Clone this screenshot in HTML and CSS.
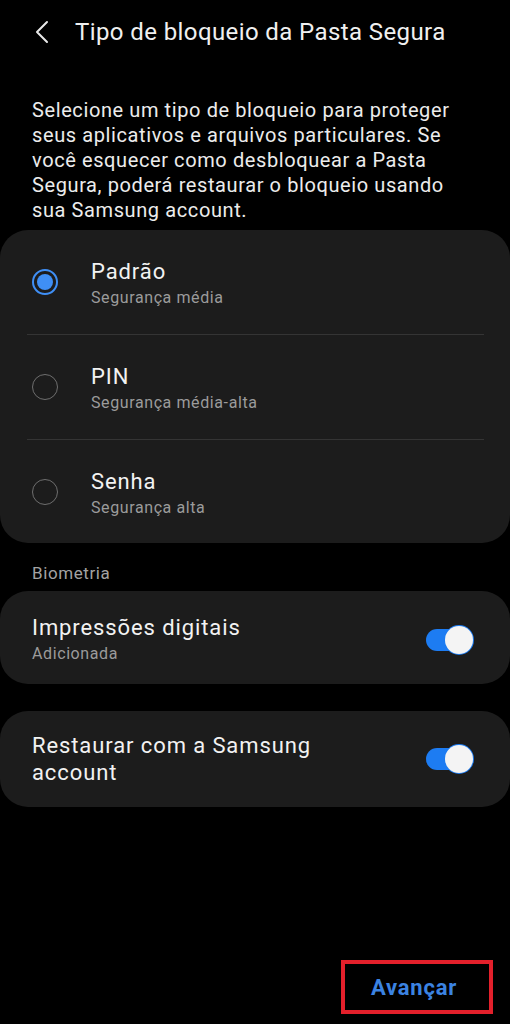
FILE: index.html
```html
<!DOCTYPE html>
<html lang="pt-BR">
<head>
  <meta charset="UTF-8" />
  <meta name="viewport" content="width=device-width, initial-scale=1.0"/>
  <title>Tipo de bloqueio da Pasta Segura</title>
  <link rel="stylesheet" href="styles.css">
</head>
<body>

<div class="screen">
  <header class="topbar">
    <svg class="back" width="14" height="24" viewBox="0 0 14 24">
      <path d="M12 2 L2 12 L12 22" fill="none" stroke="#e8e8e8" stroke-width="2" stroke-linecap="round" stroke-linejoin="round"/>
    </svg>
    <h1>Tipo de bloqueio da Pasta Segura</h1>
  </header>

  <p class="intro">Selecione um tipo de bloqueio para proteger seus aplicativos e arquivos particulares. Se você esquecer como desbloquear a Pasta Segura, poderá restaurar o bloqueio usando sua Samsung account.</p>

  <section class="card lock-list">
    <div class="lock-row">
      <span class="radio checked"></span>
      <div class="row-text">
        <p class="row-title">Padrão</p>
        <p class="row-sub">Segurança média</p>
      </div>
    </div>
    <div class="divider"></div>
    <div class="lock-row">
      <span class="radio"></span>
      <div class="row-text">
        <p class="row-title">PIN</p>
        <p class="row-sub">Segurança média-alta</p>
      </div>
    </div>
    <div class="divider"></div>
    <div class="lock-row">
      <span class="radio"></span>
      <div class="row-text">
        <p class="row-title">Senha</p>
        <p class="row-sub">Segurança alta</p>
      </div>
    </div>
  </section>

  <p class="section-label">Biometria</p>

  <section class="card switch-card fingerprint">
    <div class="row-text">
      <p class="row-title">Impressões digitais</p>
      <p class="row-sub">Adicionada</p>
    </div>
    <span class="switch on"></span>
  </section>

  <section class="card switch-card restore">
    <div class="row-text">
      <p class="row-title big">Restaurar com a Samsung account</p>
    </div>
    <span class="switch on"></span>
  </section>

  <footer class="bottom-bar">
    <button class="next">Avançar</button>
  </footer>
</div>

</body>
</html>
```

FILE: styles.css
```css
* { box-sizing: border-box; margin: 0; padding: 0; font-family: Roboto, "Noto Sans", sans-serif; }
body { background-color: #000; color: #f2f2f2; }
.screen { display: flex; flex-direction: column; min-height: 100vh; }

.topbar { height: 64px; display: flex; align-items: center; padding-left: 35px; }
.topbar .back { margin-right: 26px; }
.topbar h1 { font-size: 24px; font-weight: 400; color: #f0f0f0; letter-spacing: 0.4px; }

.intro { margin: 34px 32px 7px 32px; font-size: 20px; line-height: 25px; color: #ececec; letter-spacing: 0.6px; }

.card { background-color: #1c1c1c; border-radius: 28px; }

.lock-list { display: flex; flex-direction: column; }
.lock-row { height: 104px; display: flex; align-items: center; padding-left: 32px; }
.lock-row:last-child { height: 103px; }
.lock-row .row-text { margin-top: 4px; }
.divider { height: 1px; background-color: #343434; margin: 0 26px 0 27px; }

.radio { width: 26px; height: 26px; border-radius: 50%; border: 1.5px solid #6e6e6e; margin-right: 33px; flex-shrink: 0; }
.radio.checked { border: 2px solid #3f8ff5; padding: 3px; background-clip: content-box; background-color: #3f8ff5; }

.row-title { font-size: 22px; line-height: 26px; color: #f2f2f2; letter-spacing: 0.9px; }
.row-sub { font-size: 16px; line-height: 22px; color: #9b9b9b; margin-top: 2px; letter-spacing: 0.6px; }
.row-title.big { line-height: 27px; }

.section-label { margin: 20px 32px 8px 32px; font-size: 17px; line-height: 20px; color: #a3a3a3; letter-spacing: 0.6px; }

.switch-card { display: flex; align-items: center; justify-content: space-between; padding: 0 40px 0 32px; }
.fingerprint { height: 93px; padding-top: 4px; }
.restore { height: 96px; margin-top: 27px; }
.restore .row-text { width: 320px; }

.switch { position: relative; width: 44px; height: 22px; border-radius: 11px; background-color: #1d7cf2; flex-shrink: 0; }
.switch::after { content: ""; position: absolute; right: -3px; top: -3px; width: 28px; height: 28px; border-radius: 50%; background-color: #f4f4f4; box-shadow: 0 0 0 1px #1d7cf2; }

.bottom-bar { margin-top: auto; display: flex; justify-content: flex-end; padding: 0 17px 10px 0; }
.next { width: 152px; height: 54px; border: 4px solid #e3202b; background: transparent; color: #3b83e2; font-size: 22px; font-weight: 700; letter-spacing: 0.8px; padding-right: 6px; }
```
